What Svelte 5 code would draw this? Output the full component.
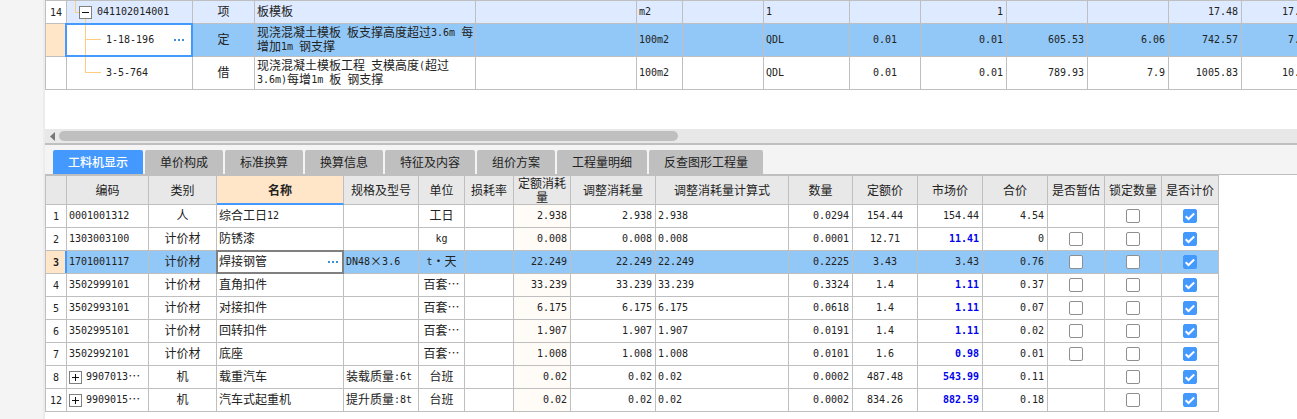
<script lang="ts">
	interface Column {
		title: string;
		width: number;
		align: 'left' | 'center' | 'right';
	}

	interface BudgetRow {
		no: string;
		level: number;
		last: boolean;
		cells: string[];
	}

	interface ResourceRow {
		no: number;
		expandable: boolean;
		cells: string[];
		marketEdited: boolean;
		estimated: boolean | null;
		locked: boolean;
		priced: boolean;
	}

	const budgetColumns: Column[] = [
		{ title: '编码', width: 126, align: 'left' },
		{ title: '类别', width: 62, align: 'center' },
		{ title: '名称', width: 221, align: 'left' },
		{ title: '项目特征', width: 161, align: 'left' },
		{ title: '单位', width: 46, align: 'left' },
		{ title: '含量', width: 81, align: 'left' },
		{ title: '工程量表达式', width: 86, align: 'left' },
		{ title: '系数', width: 71, align: 'center' },
		{ title: '工程量', width: 86, align: 'right' },
		{ title: '单价', width: 81, align: 'right' },
		{ title: '合价', width: 81, align: 'right' },
		{ title: '综合单价', width: 73, align: 'right' },
		{ title: '综合合价', width: 74, align: 'right' }
	];

	const budgetRows: BudgetRow[] = [
		{
			no: '14',
			level: 0,
			last: true,
			cells: ['041102014001', '项', '板模板', '', 'm2', '', '1', '', '1', '', '', '17.48', '17.48']
		},
		{
			no: '',
			level: 1,
			last: false,
			cells: ['1-18-196', '定', '现浇混凝土模板 板支撑高度超过3.6m 每增加1m 钢支撑', '', '100m2', '', 'QDL', '0.01', '0.01', '605.53', '6.06', '742.57', '7.43']
		},
		{
			no: '',
			level: 1,
			last: true,
			cells: ['3-5-764', '借', '现浇混凝土模板工程 支模高度(超过3.6m)每增1m 板 钢支撑', '', '100m2', '', 'QDL', '0.01', '0.01', '789.93', '7.9', '1005.83', '10.06']
		}
	];

	const tabs = ['工料机显示', '单价构成', '标准换算', '换算信息', '特征及内容', '组价方案', '工程量明细', '反查图形工程量'];

	const resourceColumns: Column[] = [
		{ title: '编码', width: 82, align: 'left' },
		{ title: '类别', width: 68, align: 'center' },
		{ title: '名称', width: 127, align: 'left' },
		{ title: '规格及型号', width: 75, align: 'left' },
		{ title: '单位', width: 46, align: 'center' },
		{ title: '损耗率', width: 49, align: 'right' },
		{ title: '定额消耗量', width: 57, align: 'right' },
		{ title: '调整消耗量', width: 85, align: 'right' },
		{ title: '调整消耗量计算式', width: 133, align: 'left' },
		{ title: '数量', width: 64, align: 'right' },
		{ title: '定额价', width: 65, align: 'center' },
		{ title: '市场价', width: 65, align: 'right' },
		{ title: '合价', width: 65, align: 'right' },
		{ title: '是否暂估', width: 57, align: 'center' },
		{ title: '锁定数量', width: 57, align: 'center' },
		{ title: '是否计价', width: 57, align: 'center' }
	];

	const NAME_COL = 2;
	const QUOTA_COL = 6;
	const MARKET_COL = 11;

	function resource(
		no: number,
		cells: string[],
		marketEdited = true,
		estimated: boolean | null = false,
		expandable = false
	): ResourceRow {
		return { no, cells, marketEdited, estimated, expandable, locked: false, priced: true };
	}

	let resourceRows = $state<ResourceRow[]>([
		resource(1, ['0001001312', '人', '综合工日12', '', '工日', '', '2.938', '2.938', '2.938', '0.0294', '154.44', '154.44', '4.54'], false, null),
		resource(2, ['1303003100', '计价材', '防锈漆', '', 'kg', '', '0.008', '0.008', '0.008', '0.0001', '12.71', '11.41', '0']),
		resource(3, ['1701001117', '计价材', '焊接钢管', 'DN48×3.6', 't·天', '', '22.249', '22.249', '22.249', '0.2225', '3.43', '3.43', '0.76'], false),
		resource(4, ['3502999101', '计价材', '直角扣件', '', '百套…', '', '33.239', '33.239', '33.239', '0.3324', '1.4', '1.11', '0.37']),
		resource(5, ['3502993101', '计价材', '对接扣件', '', '百套…', '', '6.175', '6.175', '6.175', '0.0618', '1.4', '1.11', '0.07']),
		resource(6, ['3502995101', '计价材', '回转扣件', '', '百套…', '', '1.907', '1.907', '1.907', '0.0191', '1.4', '1.11', '0.02']),
		resource(7, ['3502992101', '计价材', '底座', '', '百套…', '', '1.008', '1.008', '1.008', '0.0101', '1.6', '0.98', '0.01']),
		resource(8, ['9907013…', '机', '载重汽车', '装载质量:6t', '台班', '', '0.02', '0.02', '0.02', '0.0002', '487.48', '543.99', '0.11'], true, null, true),
		resource(12, ['9909015…', '机', '汽车式起重机', '提升质量:8t', '台班', '', '0.02', '0.02', '0.02', '0.0002', '834.26', '882.59', '0.18'], true, null, true)
	]);

	let activeTab = $state(0);
	let selectedBudget = $state(1);
	let selectedResource = $state(3);

	// row number column + all data columns + left border
	function tableWidth(columns: Column[]): number {
		return columns.reduce((sum, c) => sum + c.width, 22);
	}

	// Half-width runs are set in a monospace face so digits line up
	function splitRuns(text: string): string[] {
		return text.split(/([\x20-\x7e]+)/).filter((part) => part !== '');
	}

	function isLatin(part: string): boolean {
		return /^[\x20-\x7e]/.test(part);
	}
</script>

{#snippet label(text: string)}
	{#each splitRuns(text) as part}{#if isLatin(part)}<span class="latin">{part}</span>{:else}{part}{/if}{/each}
{/snippet}

{#snippet moreButton()}
	<button class="more" aria-label="更多">
		<svg width="10" height="2" viewBox="0 0 10 2" shape-rendering="crispEdges">
			<path d="M0 0h2v2H0zM4 0h2v2H4zM8 0h2v2H8z" fill="#3d8fd6" />
		</svg>
	</button>
{/snippet}

{#snippet toggle(open: boolean)}
	<button class="toggle" aria-label={open ? '折叠' : '展开'}>
		<svg width="13" height="13" viewBox="0 0 13 13" shape-rendering="crispEdges">
			<rect x="0.5" y="0.5" width="12" height="12" fill="#fff" stroke="#808080" />
			<path d={open ? 'M3 6.5h7' : 'M3 6.5h7M6.5 3v7'} stroke="#111" />
		</svg>
	</button>
{/snippet}

<div class="app">
	<aside class="gutter"></aside>

	<main class="main">
		<section class="budget">
			<table style="width: {tableWidth(budgetColumns)}px" aria-label="清单">
				<colgroup>
					<col style="width: 22px" />
					{#each budgetColumns as column}
						<col style="width: {column.width}px" />
					{/each}
				</colgroup>
				<tbody>
					{#each budgetRows as row, r}
						<tr
							class:item={row.level === 0}
							class:sub={row.level > 0}
							class:selected={selectedBudget === r}
							onclick={() => (selectedBudget = r)}
						>
							<th class="row-no" scope="row">{@render label(row.no)}</th>
							{#each row.cells as cell, c}
								{#if c === 0}
									<td class="code" class:focused={selectedBudget === r}>
										<div class="tree">
											{#if row.level === 0}
												<svg class="branch" width="12" height="22" viewBox="0 0 12 22" shape-rendering="crispEdges">
													<path d="M8.5 0v11.5H12" fill="none" stroke="#ffcc80" />
												</svg>
												<span class="node">
													{@render toggle(true)}
													<i class="stem"></i>
												</span>
											{:else}
												<svg class="branch" width="34" height="32" viewBox="0 0 34 32" shape-rendering="crispEdges">
													<path d={row.last ? 'M18.5 0v15.5H34' : 'M18.5 0v32M18.5 15.5H34'} fill="none" stroke="#ffcc80" />
												</svg>
											{/if}
											<span class="code-text">{@render label(cell)}</span>
											{#if selectedBudget === r}
												{@render moreButton()}
											{/if}
										</div>
									</td>
								{:else}
									<td class={budgetColumns[c].align}>{@render label(cell)}</td>
								{/if}
							{/each}
						</tr>
					{/each}
				</tbody>
			</table>
		</section>

		<!-- Horizontal scrollbar -->
		<div class="scrollbar">
			<button class="scroll-arrow" aria-label="向左滚动">
				<svg width="5" height="9" viewBox="0 0 5 9">
					<path d="M5 0v9L0 4.5z" fill="#777" />
				</svg>
			</button>
			<div class="track">
				<div class="thumb"></div>
			</div>
		</div>

		<div class="tabs" role="tablist">
			{#each tabs as tab, i}
				<button
					class="tab"
					class:active={activeTab === i}
					role="tab"
					aria-selected={activeTab === i}
					onclick={() => (activeTab = i)}
				>
					{tab}
				</button>
			{/each}
		</div>

		<section class="resources">
			<table style="width: {tableWidth(resourceColumns)}px" aria-label="工料机显示">
				<colgroup>
					<col style="width: 22px" />
					{#each resourceColumns as column}
						<col style="width: {column.width}px" />
					{/each}
				</colgroup>
				<thead>
					<tr>
						<th></th>
						{#each resourceColumns as column, c}
							<th scope="col" class:current={c === NAME_COL}>{column.title}</th>
						{/each}
					</tr>
				</thead>
				<tbody>
					{#each resourceRows as row}
						<tr class:selected={selectedResource === row.no} onclick={() => (selectedResource = row.no)}>
							<th class="row-no" scope="row">{@render label(String(row.no))}</th>
							{#each row.cells as cell, c}
								{#if c === 0 && row.expandable}
									<td class="boxed">
										<div class="expand">
											{@render toggle(false)}
											<span class="box-text">{@render label(cell)}</span>
										</div>
									</td>
								{:else if c === NAME_COL && selectedResource === row.no}
									<td class="boxed editing">
										<div class="edit">
											<span class="box-text">{@render label(cell)}</span>
											{@render moreButton()}
										</div>
									</td>
								{:else}
									<td
										class={resourceColumns[c].align}
										class:first={c === 0}
										class:quota={c === QUOTA_COL}
										class:edited={c === MARKET_COL && row.marketEdited}
									>
										{@render label(cell)}
									</td>
								{/if}
							{/each}
							<td class="check">
								{#if row.estimated !== null}
									<input type="checkbox" aria-label="是否暂估" bind:checked={row.estimated} />
								{/if}
							</td>
							<td class="check">
								<input type="checkbox" aria-label="锁定数量" bind:checked={row.locked} />
							</td>
							<td class="check">
								<input type="checkbox" aria-label="是否计价" bind:checked={row.priced} />
							</td>
						</tr>
					{/each}
				</tbody>
			</table>
		</section>
	</main>
</div>

<style>
	:global(body) {
		margin: 0;
		overflow: hidden;
	}

	.app,
	.app * {
		box-sizing: border-box;
	}

	.app {
		display: flex;
		min-height: 100vh;
		background: #f4f4f4;
		color: #222;
		font-family: 'Noto Sans CJK SC', sans-serif;
		font-size: 12px;
		line-height: 14px;
	}

	.gutter {
		flex: none;
		width: 45px;
		border-right: 2px solid #ececec;
	}

	.main {
		flex: 1;
		min-width: 0;
		display: flex;
		flex-direction: column;
	}

	button {
		padding: 0;
		border: 0;
		background: none;
		color: inherit;
		font: inherit;
		cursor: pointer;
	}

	svg {
		display: block;
	}

	.latin {
		font-family: 'DejaVu Sans Mono', monospace;
		font-size: 10px;
		line-height: 1;
		vertical-align: 1px;
	}

	/* Tables */
	table {
		table-layout: fixed;
		border-collapse: separate;
		border-spacing: 0;
	}

	th,
	td {
		position: relative;
		padding: 0;
		border-right: 1px solid #bfbfbf;
		border-bottom: 1px solid #bfbfbf;
		font-weight: 400;
		text-align: left;
		vertical-align: middle;
	}

	tr > :first-child {
		border-left: 1px solid #bfbfbf;
	}

	.left {
		padding: 0 0 2px 2px;
	}

	.center {
		padding-bottom: 2px;
		text-align: center;
	}

	.right {
		padding: 0 3px 2px 0;
		text-align: right;
	}

	.row-no {
		background: #fff;
		text-align: center;
	}

	.selected {
		background: #92c8f7;
	}

	.selected .row-no {
		background: #ffe6c8;
		font-weight: 700;
	}

	/* Budget list */
	.budget {
		padding-bottom: 39px;
		background: #fff;
		overflow: hidden;
	}

	.budget tr:first-child > * {
		border-top: 1px solid #bfbfbf;
	}

	.item {
		height: 24px;
	}

	.item:not(.selected) {
		background: #deeaff;
	}

	.sub {
		height: 33px;
	}

	.focused {
		background: #fff;
	}

	.focused::after {
		content: '';
		position: absolute;
		inset: -1px -1px -1px -2px;
		border: 2px solid #4499ff;
		pointer-events: none;
	}

	.tree {
		display: flex;
		align-items: center;
	}

	.branch {
		flex: none;
	}

	.node {
		position: relative;
	}

	/* Line from the toggle down to the first child */
	.stem {
		position: absolute;
		top: 13px;
		left: 6px;
		width: 1px;
		height: 5px;
		background: #ffcc80;
	}

	.code-text {
		flex: 1;
		padding: 0 0 2px 5px;
	}

	.more {
		display: grid;
		place-items: center;
		flex: none;
		width: 20px;
		height: 18px;
	}

	.tree .more {
		margin-right: 3px;
	}

	.toggle {
		display: block;
		flex: none;
	}

	/* Scrollbar */
	.scrollbar {
		display: flex;
		align-items: center;
		height: 16px;
		border-bottom: 2px solid #bfbfbf;
		background: #e8e8e8;
	}

	.scroll-arrow {
		flex: none;
		width: 14px;
		padding-left: 5px;
	}

	.track {
		flex: 1;
	}

	.thumb {
		width: 50%;
		height: 10px;
		border-radius: 5px;
		background: #bfbfbf;
	}

	/* Tabs */
	.tabs {
		display: flex;
		gap: 2px;
		padding: 5px 8px 0;
		border-bottom: 1px solid #bfbfbf;
	}

	.tab {
		height: 24px;
		padding: 0 15px;
		border-radius: 2px 2px 0 0;
		background: #bfbfbf;
		white-space: nowrap;
	}

	.tab.active {
		background: #4499ff;
		color: #fff;
		font-weight: 500;
	}

	/* Resource list */
	.resources {
		flex: 1;
		background: #fff;
		overflow: hidden;
	}

	.resources tr {
		height: 23px;
	}

	.resources thead tr {
		height: 30px;
	}

	.resources thead th {
		border-top: 1px solid #bfbfbf;
		background: #e8e8e8;
		text-align: center;
	}

	.resources thead .current {
		border-bottom: 2px solid #4499ff;
		background: #ffe6c8;
		font-weight: 700;
	}

	.selected .first::before {
		content: '';
		position: absolute;
		inset: 0 auto 0 -2px;
		width: 2px;
		background: #4499ff;
	}

	tr:not(.selected) .quota {
		background: #fffbf7;
	}

	.edited {
		color: #0000f0;
		font-weight: 700;
	}

	.boxed {
		padding-left: 2px;
	}

	.box-text {
		padding-bottom: 2px;
	}

	.editing {
		background: #fff;
	}

	.editing::after {
		content: '';
		position: absolute;
		inset: -1px;
		border: 2px solid #808080;
		pointer-events: none;
	}

	.edit {
		display: flex;
		align-items: center;
		justify-content: space-between;
	}

	.expand {
		display: flex;
		align-items: center;
		gap: 4px;
	}

	.check input {
		display: block;
		appearance: none;
		width: 14px;
		height: 14px;
		margin: 0 auto;
		border: 1px solid #8f8f8f;
		border-radius: 2px;
		background: #fff;
	}

	.check input:checked {
		border-color: #4499ff;
		background: #4499ff url("data:image/svg+xml,%3Csvg xmlns='http://www.w3.org/2000/svg' viewBox='0 0 12 12'%3E%3Cpath d='M1.7 6.2l2.8 2.8L10.2 3.5' fill='none' stroke='white' stroke-width='2'/%3E%3C/svg%3E") center / 12px;
	}
</style>
